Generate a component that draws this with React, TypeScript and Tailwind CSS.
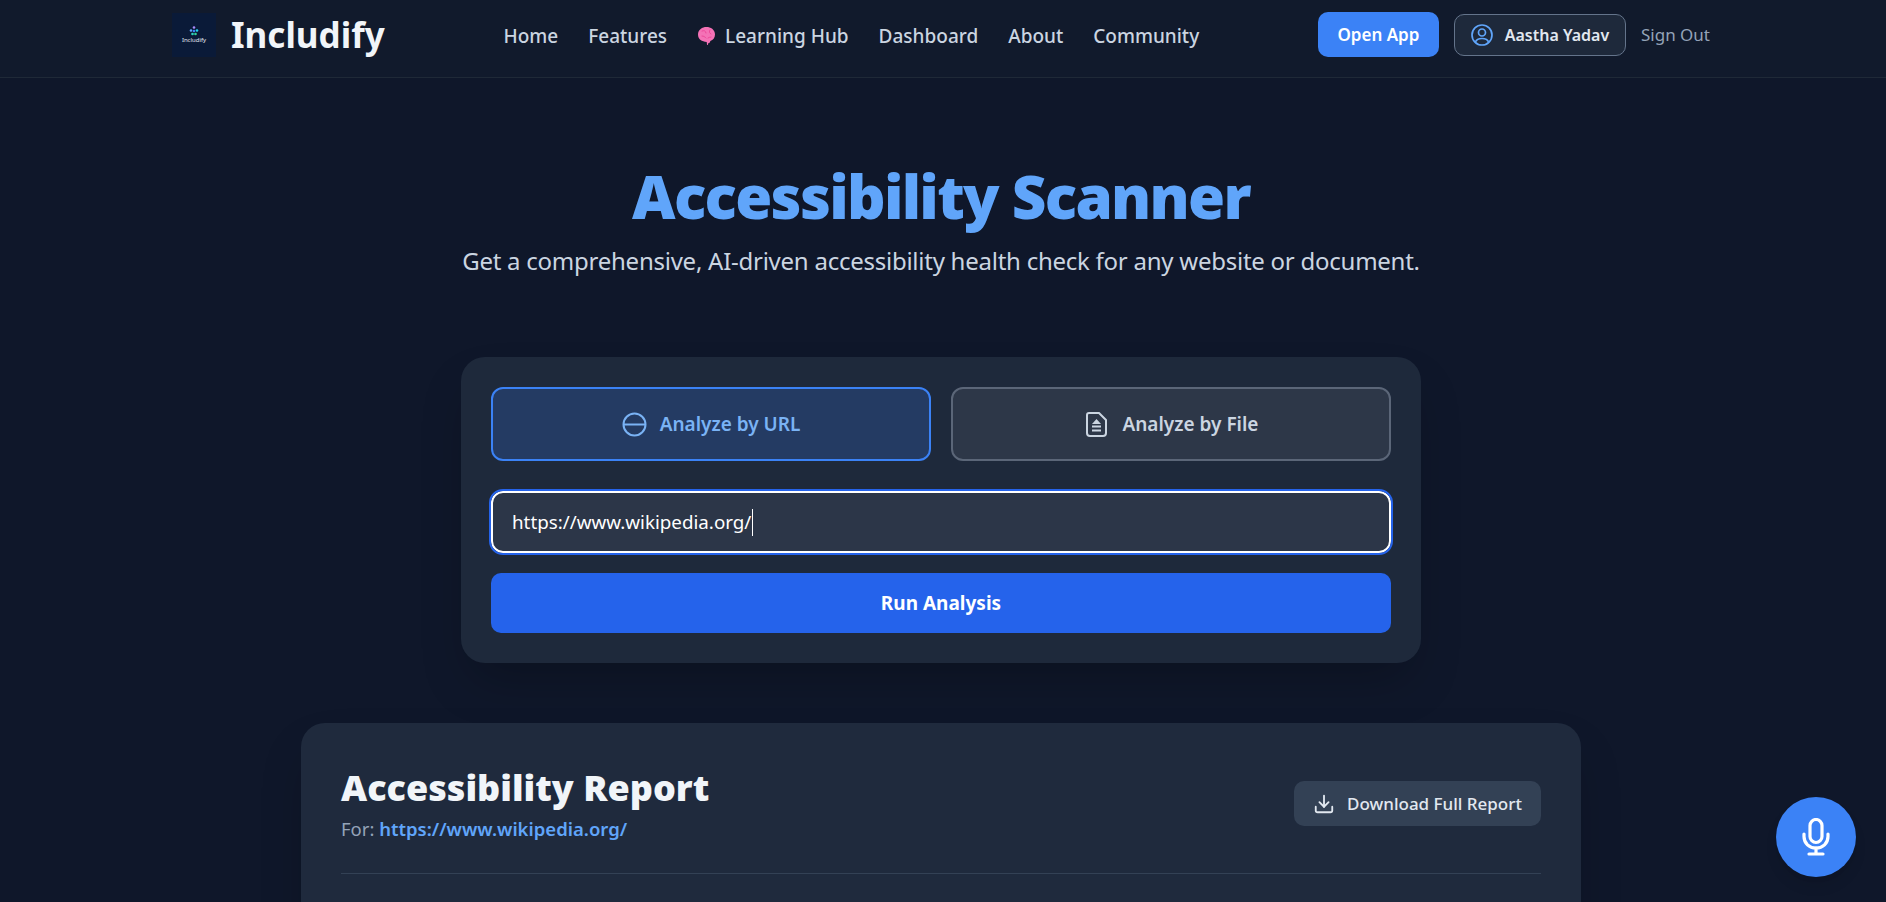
import { Download } from "lucide-react";

const NAV_LINKS = ["Home", "Features", "Learning Hub", "Dashboard", "About", "Community"];

function BrainIcon() {
  return (
    <svg width="19" height="20" viewBox="0 0 19 20" className="shrink-0">
      <path
        d="M9.5 1C13.5 1 18 3.4 18 8.6c0 3.4-2 5.7-4.6 6.3l-.6 1.4c-.3.8-.9 1.2-1.5.8l-.3 1.4c-.2.7-.9.7-1 0l-.3-2.6C5 15.800 1 13.400 1 8.600 1 3.600 5.300 1 9.500 1z"
        fill="#f472b6"
      />
      <path d="M5 5c2-1 4 0 4 2M13 4c-1 1.500-1 3 1 4M5 10c2 0 3 1 4 2M14 11c-1 0-2 .5-3 1" stroke="#ec4899" strokeWidth="1" fill="none" strokeLinecap="round" />
    </svg>
  );
}

function UrlIcon() {
  return (
    <svg width="25" height="25" viewBox="0 0 25 25" fill="none" stroke="currentColor" strokeWidth="2">
      <circle cx="12.500" cy="12.500" r="11" />
      <path d="M1.500 12.500h22" />
    </svg>
  );
}

function FileIcon() {
  return (
    <svg width="21" height="25" viewBox="0 0 21 25" fill="none" stroke="currentColor" strokeWidth="2" strokeLinejoin="round">
      <path d="M3 1h10l7 7v13a3 3 0 0 1-3 3H4a3 3 0 0 1-3-3V3a2 2 0 0 1 2-2z" />
      <path d="M10.500 7l-4.500 5h9z" fill="currentColor" stroke="none" />
      <path d="M6 14.500h9M6 18.500h9" />
    </svg>
  );
}

function UserIcon() {
  return (
    <svg width="22" height="22" viewBox="0 0 22 22" fill="none" stroke="currentColor" strokeWidth="1.700">
      <circle cx="11" cy="11" r="10" />
      <circle cx="11" cy="8.500" r="3.500" />
      <path d="M4.500 18c.8-2.500 3-3.500 6.500-3.500s5.700 1 6.500 3.500" />
    </svg>
  );
}

function MicIcon() {
  return (
    <svg width="28" height="38" viewBox="0 0 28 38" fill="none" stroke="white" strokeWidth="3.200" strokeLinecap="round">
      <rect x="8" y="1.500" width="12" height="23" rx="6" />
      <path d="M2 16v2.500c0 6.800 5.200 11.500 12 11.500s12-4.700 12-11.500V16" />
      <path d="M14 30v6M7 36h14" />
    </svg>
  );
}

function Logo() {
  return (
    <div className="flex h-[44px] w-[44px] flex-col items-center justify-center bg-[#0a1a38]">
      <svg width="10" height="10" viewBox="0 0 10 10">
        <circle cx="5" cy="1.500" r="1.300" fill="#a78bfa" />
        <circle cx="2" cy="4.500" r="1.300" fill="#60a5fa" />
        <circle cx="8" cy="4.500" r="1.300" fill="#22d3ee" />
        <circle cx="5" cy="5" r="1.300" fill="#3b82f6" />
        <circle cx="3.500" cy="8" r="1.300" fill="#2dd4bf" />
        <circle cx="6.500" cy="8" r="1.300" fill="#34d399" />
      </svg>
      <span className="text-[6px] leading-[8px] text-slate-200">Includify</span>
    </div>
  );
}

export default function App() {
  return (
    <div className="relative h-screen overflow-hidden bg-[#0f172a] font-['Noto_Sans',sans-serif] text-white">
      {/* Top nav */}
      <header className="flex h-[78px] items-center justify-between border-b border-[#1f2937] bg-[#111a2c] pr-[176px] pb-[8px] pl-[172px]">
        <div className="flex items-center gap-[15px]">
          <Logo />
          <span className="text-[35px] leading-none font-bold text-[#f1f5f9]">Includify</span>
        </div>
        <nav className="mt-[3px] flex items-center gap-[30px] text-[19px] font-medium text-[#cbd5e1]">
          {NAV_LINKS.map((link) => (
            <a key={link} className="flex items-center gap-[9px]">
              {link === "Learning Hub" && <BrainIcon />}
              {link}
            </a>
          ))}
        </nav>
        <div className="flex items-center gap-[15px]">
          <button className="h-[45px] w-[121px] rounded-[10px] bg-[#3b82f6] text-[17px] font-semibold text-white">Open App</button>
          <div className="flex h-[42px] w-[172px] items-center justify-center gap-[12px] rounded-[10px] border border-[#64748b] bg-[#1e293b] text-[16px] font-semibold text-[#e2e8f0]">
            <span className="text-[#60a5fa]">
              <UserIcon />
            </span>
            Aastha Yadav
          </div>
          <a className="text-[17px] text-[#94a3b8]">Sign Out</a>
        </div>
      </header>

      <main className="flex flex-col items-center pr-[4px]">
        <h1 className="mt-[86px] text-[60px] leading-[64px] font-black tracking-[-1.700px] text-[#60a5fa]">Accessibility Scanner</h1>
        <p className="mt-[17px] text-[24px] leading-[32px] tracking-[-0.250px] text-[#cbd5e1]">
          Get a comprehensive, AI-driven accessibility health check for any website or document.
        </p>

        {/* Scanner card */}
        <section className="mt-[80px] flex w-[960px] flex-col rounded-[24px] bg-[#1e293b] p-[30px] shadow-2xl">
          <div className="grid grid-cols-2 gap-[20px]">
            <button className="flex h-[74px] items-center justify-center gap-[13px] rounded-[12px] border-2 border-[#3b82f6] bg-[#243b63] text-[19px] font-semibold text-[#7ab3f5]">
              <UrlIcon />
              Analyze by URL
            </button>
            <button className="flex h-[74px] items-center justify-center gap-[15px] rounded-[12px] border-2 border-[#5b6678] bg-[#2d3748] pl-[3px] text-[19px] font-semibold text-[#cbd5e1]">
              <FileIcon />
              Analyze by File
            </button>
          </div>
          <div className="mt-[30px] flex h-[62px] items-center rounded-[12px] border-2 border-white bg-[#2c3648] px-[19px] text-[18.800px] text-white outline-2 outline-[#2563eb]">
            https://www.wikipedia.org/
            <span className="ml-[1px] h-[27px] w-px bg-white" />
          </div>
          <button className="mt-[20px] h-[60px] rounded-[10px] bg-[#2563eb] text-[19px] font-bold text-white">Run Analysis</button>
        </section>

        {/* Report card */}
        <section className="mt-[60px] h-[400px] w-[1280px] rounded-[24px] bg-[#1f2a3d] px-[40px] pt-[40px] shadow-2xl">
          <div className="flex items-start justify-between border-b border-[#334155] pb-[31px]">
            <div>
              <h2 className="mt-[2px] text-[36px] leading-[46px] font-black text-[#f1f5f9]">Accessibility Report</h2>
              <p className="mt-[5px] text-[18.500px] leading-[26px] text-[#94a3b8]">
                For: <a className="font-semibold text-[#60a5fa]">https://www.wikipedia.org/</a>
              </p>
            </div>
            <button className="mt-[18px] flex h-[45px] w-[247px] items-center justify-center gap-[12px] rounded-[10px] bg-[#334155] text-[17px] font-medium text-[#e2e8f0]">
              <Download size={22} strokeWidth={2} />
              Download Full Report
            </button>
          </div>
        </section>
      </main>

      {/* Voice assistant */}
      <button className="absolute right-[30px] bottom-[25px] flex h-[80px] w-[80px] items-center justify-center rounded-full bg-[#3b82f6] shadow-lg">
        <MicIcon />
      </button>
    </div>
  );
}
